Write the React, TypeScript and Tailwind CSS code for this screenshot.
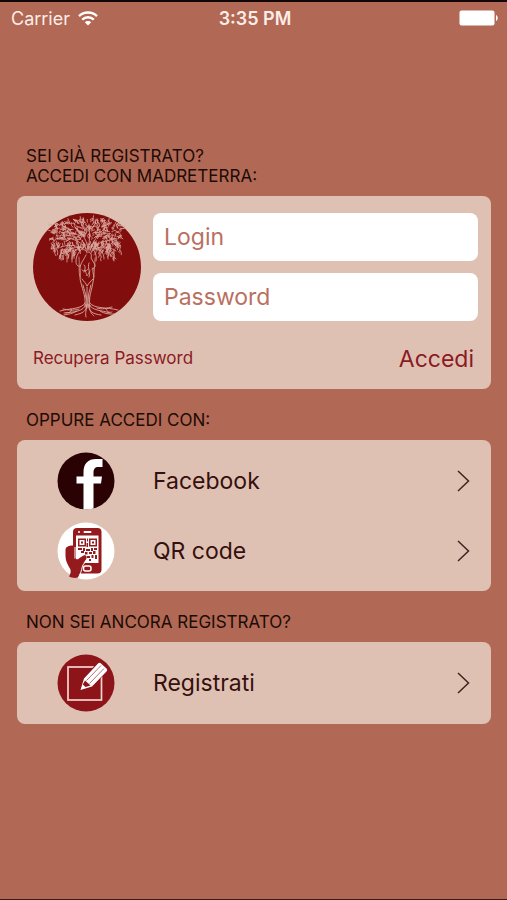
import type { ReactNode } from "react";

// Small seeded generator so the foliage is the same on every render
function makeRandom(seed: number) {
  let s = seed;
  return () => {
    s = (s * 16807) % 2147483647;
    return s / 2147483647;
  };
}

function buildFoliage() {
  const rnd = makeRandom(71);
  const curls: string[] = [];
  while (curls.length < 480) {
    const x = 19 + rnd() * 69;
    const edge = Math.abs(x - 54) / 35;
    const top = 7 + edge * edge * 5;
    // the lower rim hangs in separate strands
    const bottom = 38 + edge * 6 + Math.sin(x * 0.95) * 4 - (edge > 0.85 ? 8 : 0);
    const y = top + rnd() * (bottom - top);
    // keep the middle free for the head and arms
    if (Math.abs(x - 54) < 8 && y > 34) continue;
    const length = 2 + rnd() * 3;
    const angle = y > 27 ? Math.PI / 2 + (rnd() - 0.5) * 1.2 : Math.atan2(y - 32, x - 54) + (rnd() - 0.5) * 2.4;
    const dx = Math.cos(angle) * length;
    const dy = Math.sin(angle) * length;
    const bend = (rnd() - 0.5) * 5;
    curls.push(
      `M${x.toFixed(1)} ${y.toFixed(1)}q${bend.toFixed(1)} ${(dy / 2).toFixed(1)} ${dx.toFixed(1)} ${dy.toFixed(1)}`
    );
  }
  return curls.join("");
}

const foliage = buildFoliage();

function TreeLogo() {
  return (
    <svg viewBox="0 0 108 108" className="size-[108px] shrink-0" role="img" aria-label="Madreterra">
      <circle cx="54" cy="54" r="54" fill="#820d0d" />
      <g fill="none" stroke="#dba99f" strokeLinecap="round" strokeLinejoin="round">
        <path d={foliage} strokeWidth="0.8" />
        {/* branches */}
        <path
          strokeWidth="0.8"
          d="M54 40C53 32 45 27 35 25M55 38C55 29 50 20 42 15M55 37C57 28 57 20 56 11M57 38C59 29 65 22 71 16M58 40C61 31 69 28 79 27M53 38C46 32 36 31 28 34M59 38C66 32 76 33 83 38M50 34C43 35 39 40 39 46M61 35C68 36 71 40 71 46M46 34C35 35 30 40 29 47M28 37v10M34 38v11M75 36v10M81 36v12M39 37v12"
        />
        {/* figure */}
        <path
          strokeWidth="0.9"
          d="M51 34c-5 4-8 9-8 14 0 4 2 6 4 5M58 34c4 4 6 8 5 14M55 39c3 0 4 3 3 6l3 5c2 3 1 5-2 6M53 42c-2 5-6 8-6 14 1 5-1 9 1 14 2 8 5 14 4 24M60 55c-1 5 2 8 0 14-1 8-5 15-3 25M49 57c2 2 5 1 6-1M51 52c2 1 1 5 0 7M56 50c-2 5 2 9 0 14M49 66c2 3 4 4 5 7 2-3 4-5 6-7M54 74v21M50 72c1 5 3 8 3 13M58 72c-1 5-3 9-3 14"
        />
        <path strokeWidth="0.7" d="M46 44c1 8-1 13 1 20M62 45c0 7-1 12-1 19M52 57l2 6 3-5M55 86v8M53 82l1 8M56 82v7" />
        {/* roots */}
        <path
          strokeWidth="0.9"
          d="M52 90c-3 6-13 5-25 8M53 91c-2 8-13 8-22 9M54 91c-1 8-4 9-12 11M55 91c1 8 5 10 13 11M56 91c3 7 12 6 21 9M57 90c4 6 16 4 28 7M54 92c-1 7-2 9-1 12M56 92c1 8 3 9 5 11M46 96c-6 2-10 1-16 0M64 95c5 2 10 0 15-1M44 98c-5 3-8 3-13 4M67 98c5 3 9 3 14 3M38 96c2 2-1 4-5 4M73 96c1 3 4 4 6 3"
        />
      </g>
    </svg>
  );
}

function FacebookIcon() {
  return (
    <svg viewBox="0 0 58 58" className="size-[58px]" aria-hidden="true">
      <circle cx="29" cy="29" r="28.5" fill="#2a0203" />
      <path
        fill="#fff"
        d="M26.5 57.4V31.5H19.5V24.5H26.5V20.5C26.5 11.5 31 7 39 7H45.5V15H41.5C38 15 36.5 17 36.5 20.5V24.5H45L44 31.5H36.5V56.5A28.5 28.5 0 0 1 26.5 57.4Z"
      />
    </svg>
  );
}

function QrIcon() {
  return (
    <svg viewBox="0 0 58 58" className="size-[58px]" aria-hidden="true">
      <circle cx="29" cy="29" r="28.5" fill="#fff" />
      <g fill="#951a1d">
        <rect x="16" y="6" width="28.5" height="45.5" rx="4" />
        <rect x="19" y="13.5" width="22.5" height="27.5" fill="#fff" />
        {/* finder squares */}
        <path fillRule="evenodd" d="M21 16.5h8v8h-8zM22.5 18v5h5v-5zM32 16.5h8v8h-8zM33.5 18v5h5v-5z" />
        <path d="M24 19.5h2v2h-2zM35 19.5h2v2h-2z" />
        <path d="M30 16.5h1v3h-1zM29.5 21h1.5v4h-1.5zM21 26h4v2h-4zM26 26h2v3h-2zM29 27h4v2h-4zM34 26h2v3h-2zM37 26h3v2h-3zM24 29h3v2h-3zM28 30h2.5v2.5H28zM32 30h3v2h-3zM36 29h2.5v3H36zM30 34h3v2h-3zM34.5 33h2v3h-2zM38 33h2v4h-2zM32 37h2v2h-2z" />
        {/* hand */}
        <path d="M12 54.5C14 51 14.5 48 12 45C10 41.5 8.5 38 8.5 34V27.5C9 24.5 12 23.5 15.5 23.5H17.5V36C20 38 21 37.5 22.5 36L26.5 33.5C29.5 32.5 30.5 35 29 37.5L25.5 42.5C24 46 24.5 48 21 55.5C18 56.5 14 55.5 12 54.5Z" />
        <path d="M18 25V36.500M29.500 38L26 43C24.500 46 25 48 22 55.500" fill="none" stroke="#fff" strokeWidth="1" />
      </g>
      <rect x="26.5" y="44" width="7.5" height="5" rx="2" fill="none" stroke="#fff" strokeWidth="1.5" />
      <circle cx="22" cy="10" r="1" fill="#fff" />
      <rect x="26.5" y="9" width="8" height="2" rx="1" fill="#fff" />
    </svg>
  );
}

function RegisterIcon() {
  return (
    <svg viewBox="0 0 58 58" className="size-[58px]" aria-hidden="true">
      <circle cx="29" cy="29" r="28.5" fill="#8d151a" />
      <rect x="11" y="13" width="33.5" height="33" fill="none" stroke="#f3d5d0" strokeWidth="1.7" />
      <path d="M22.5 37L26 24L42 7L51.5 15.5L35.5 33.5Z" fill="#8d151a" />
      <path d="M27 24.5L41 9.5Q42.5 8 44 9.5L49.5 14.5Q51 16 49.5 17.5L35 32.5L23.5 36Z" fill="#fff" />
      <path d="M28 26.5L33.5 31.5L28.5 33L25.8 30.5Z" fill="#8d151a" />
      <path d="M29.5 26.5L44 11.5M32.5 29.5L47 14.5" stroke="#a5494a" strokeWidth="0.8" />
    </svg>
  );
}

function Chevron() {
  return (
    <svg viewBox="0 0 13 22" className="h-[22px] w-[13px]" fill="none" stroke="#43221d" strokeWidth="1.5" aria-hidden="true">
      <path d="M1 1L11.5 11L1 21" />
    </svg>
  );
}

function StatusBar() {
  return (
    <header className="grid h-8 grid-cols-3 items-center pr-2 pl-[11px] text-[#fdeee8]">
      <div className="flex items-center gap-2 text-[18px]">
        <span>Carrier</span>
        <svg viewBox="0 0 20 15" className="h-[15px] w-5" fill="none" stroke="#fff" strokeWidth="2.4" aria-label="Wi-Fi">
          <path d="M1 5.2C6 0.3 14 0.3 19 5.2M4.2 8.6C7.5 5.4 12.5 5.4 15.8 8.6" />
          <path d="M6.8 11.2C8.5 9.5 11.5 9.5 13.2 11.2L10 14.5Z" fill="#fff" stroke="none" />
        </svg>
      </div>
      <span className="text-center text-[18px] font-semibold">3:35 PM</span>
      <svg viewBox="0 0 40 16" className="h-4 w-10 justify-self-end" fill="#fff" aria-label="Battery">
        <rect x="0.5" y="0.5" width="35" height="15" rx="2" />
        <path d="M37 5C39.3 6 39.3 10 37 11Z" />
      </svg>
    </header>
  );
}

function Heading({ children }: { children: ReactNode }) {
  return <h2 className="mb-2.5 ml-[9px] text-[17px] leading-5 text-[#1d0b06]">{children}</h2>;
}

function Row({ icon, label }: { icon: ReactNode; label: string }) {
  return (
    <button type="button" className="flex w-full items-center pr-[21px] pl-10 text-left text-[23px] text-[#35100c]">
      {icon}
      <span className="ml-[38px] flex-1">{label}</span>
      <Chevron />
    </button>
  );
}

const card = "rounded-lg bg-[#dfc1b4]";
const field =
  "h-12 w-full rounded-lg bg-white px-[11px] text-[23px] text-[#35100c] outline-none placeholder:text-[#b9705f] placeholder:opacity-100";

export default function App() {
  return (
    <div className="min-h-screen border-t-2 border-b border-t-[#120706] border-b-[#3a1a14] bg-[#b16854] font-['Inter',sans-serif]">
      <StatusBar />

      <main className="mr-4 ml-[17px] flex flex-col gap-[21px] pt-28">
        <section>
          <Heading>
            SEI GIÀ REGISTRATO?
            <br />
            ACCEDI CON MADRETERRA:
          </Heading>
          <form className={`${card} pt-[17px] pr-[13px] pb-3 pl-4`} onSubmit={(e) => e.preventDefault()}>
            <div className="flex gap-3">
              <TreeLogo />
              <div className="flex flex-1 flex-col gap-3">
                <input className={field} type="text" aria-label="Login" placeholder="Login" />
                <input className={field} type="password" aria-label="Password" placeholder="Password" />
              </div>
            </div>
            <div className="mt-5 flex h-9 items-center justify-between pr-1 text-[#8b1a23]">
              <a href="#recupera" className="text-[17px]">
                Recupera Password
              </a>
              <button type="submit" className="text-[23px]">
                Accedi
              </button>
            </div>
          </form>
        </section>

        <section>
          <Heading>OPPURE ACCEDI CON:</Heading>
          <div className={`${card} flex flex-col gap-3 pt-3 pb-[11px]`}>
            <Row icon={<FacebookIcon />} label="Facebook" />
            <Row icon={<QrIcon />} label="QR code" />
          </div>
        </section>

        <section>
          <Heading>NON SEI ANCORA REGISTRATO?</Heading>
          <div className={`${card} py-3`}>
            <Row icon={<RegisterIcon />} label="Registrati" />
          </div>
        </section>
      </main>
    </div>
  );
}
